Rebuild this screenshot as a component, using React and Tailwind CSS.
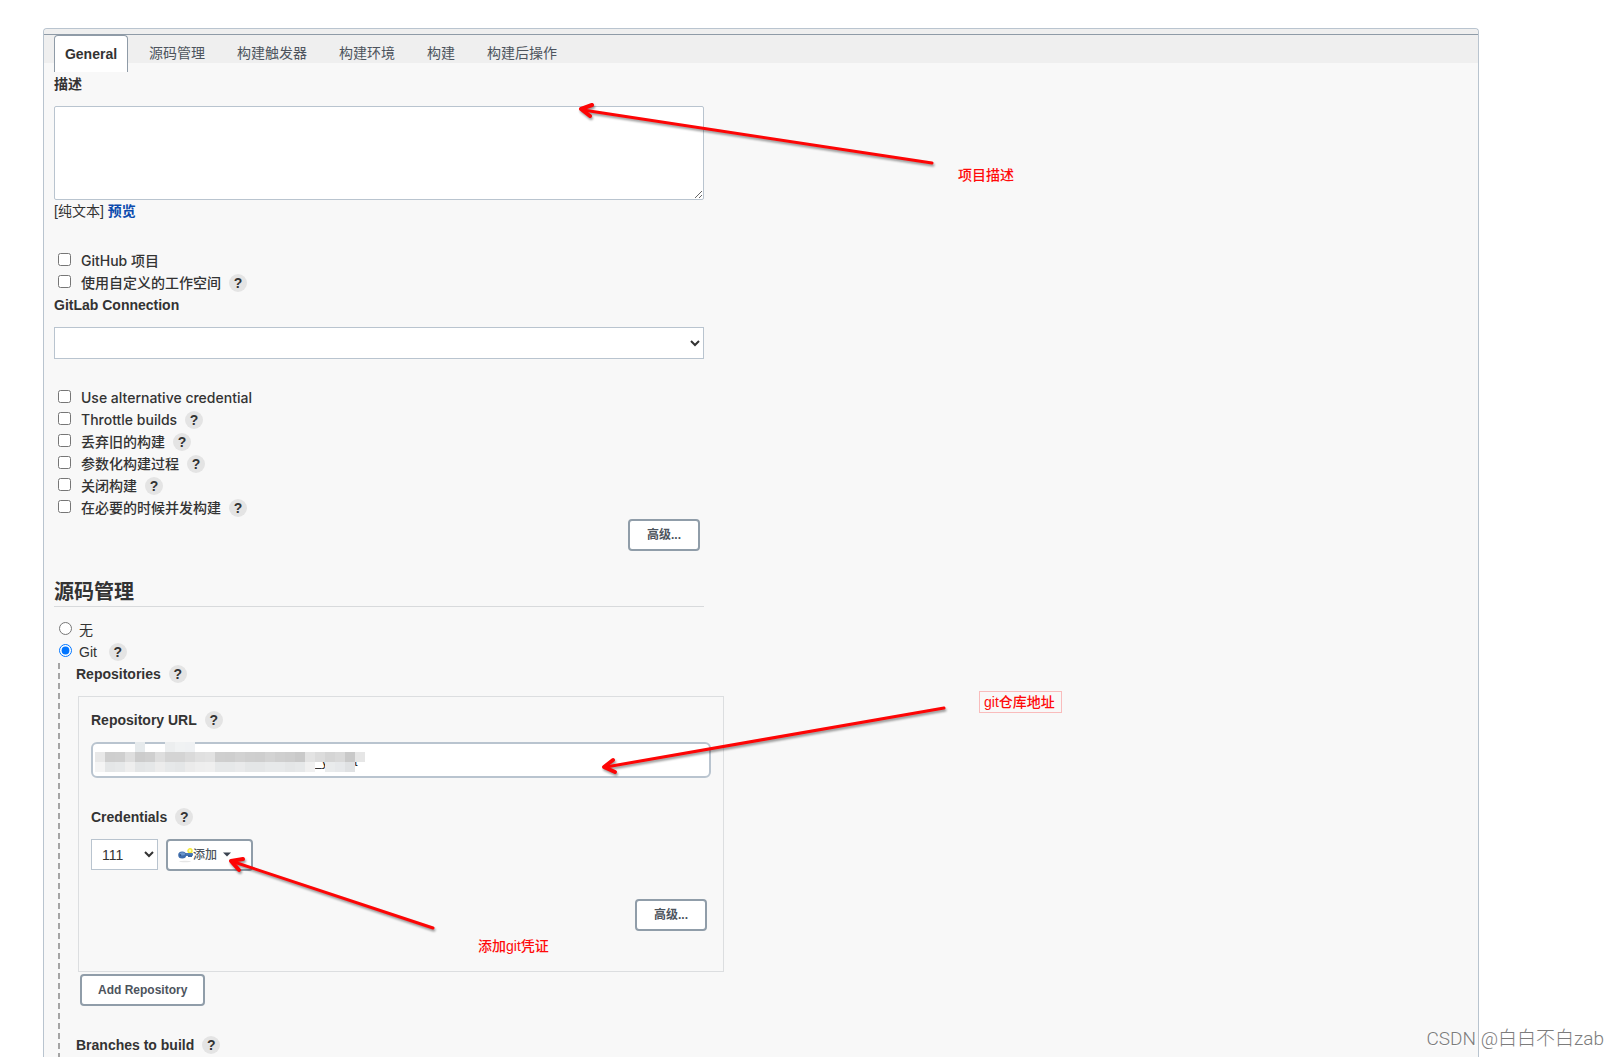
import React from 'react';

const TABS = ['源码管理', '构建触发器', '构建环境', '构建', '构建后操作'];

const BUILD_OPTIONS = [
  { id: 'alt-credential', label: 'Use alternative credential', help: false },
  { id: 'throttle', label: 'Throttle builds', help: true },
  { id: 'discard', label: '丢弃旧的构建', help: true },
  { id: 'params', label: '参数化构建过程', help: true },
  { id: 'disable', label: '关闭构建', help: true },
  { id: 'concurrent', label: '在必要的时候并发构建', help: true },
];

// Grey levels of the masked repository url, one per 10px cell
const MASK_TOP = [
  [4, '#e6eaec'], [7, '#eceeef'], [8, '#f0f2f3'], [9, '#eff1f3'],
];
const MASK_MIDDLE = [
  '#e8e8e8', '#cecece', '#cfcfcf', '#dedede', '#cccccc', '#cfcfcf', '#dedede', '#d4d4d4', '#d4d4d4',
  '#dadada', '#e0e0e0', '#e2e2e2', '#cfcfcf', '#cecece', '#d2d2d2', '#cfcfcf', '#cecece', '#d3d3d3',
  '#cfcfcf', '#cdcdcd', '#c9c9c9', '#e3e3e3', '#dcdcdc', '#d5d5d5', '#d9d9d9', '#c9c9c9', '#e6e6e6',
];
const MASK_BOTTOM = [
  '#f4f4f4', '#e4e6e7', '#e6e8e9', '#eeeeee', '#e3e5e6', '#e5e7e8', '#ececec', '#e6e8e9', '#e4e6e7',
  '#ebebeb', '#eeeeee', '#efefef', '#e6e8e9', '#e6e8e9', '#e9eaeb', '#e4e6e7', '#e4e6e7', '#e7e9ea',
  '#e7e9ea', '#e4e6e7', '#e6e8e9', '#f0f0f0', null, '#e9ebec', '#e6e8ea', '#dfe1e3', null,
];

const ARROWS = [
  { id: 'desc', line: 'M932 163 L583 110', head: 'M592 105 L581 109 L590 116' },
  { id: 'url', line: 'M944 708 L606 767', head: 'M613 760 L604 767 L615 772' },
  { id: 'cred', line: 'M433 928 L234 862', head: 'M243 859 L231 861 L239 870' },
];

const HelpButton = ({ topic }) => (
  <button
    type="button"
    aria-label={`Help: ${topic}`}
    className="ml-2 h-[18px] w-[18px] shrink-0 rounded-full bg-[#e4e4e4] text-center text-sm leading-[18px] font-bold text-[#333]"
  >
    ?
  </button>
);

const CheckRow = ({ id, label, help }) => (
  <div className="flex h-[22px] items-center">
    <input id={id} type="checkbox" className="mr-[10px] mb-[3px] ml-1 h-[13px] w-[13px]" />
    <label htmlFor={id} className="font-['Inter','Noto_Sans_CJK_SC',sans-serif] text-sm leading-[22px] font-medium">{label}</label>
    {help && <HelpButton topic={label} />}
  </div>
);

const FieldLabel = ({ htmlFor, children }) => (
  <div className="flex h-[22px] items-center">
    <label htmlFor={htmlFor} className="font-bold">{children}</label>
    <HelpButton topic={children} />
  </div>
);

const FormButton = ({ className = '', children }) => (
  <button
    type="button"
    className={`flex h-8 items-center rounded border-2 border-[#909da9] bg-white text-xs text-[#4d545d] ${className}`}
  >
    {children}
  </button>
);

const KeyIcon = () => (
  <svg width="15" height="15" viewBox="0 0 15 15" aria-hidden="true">
    <ellipse cx="7" cy="13.5" rx="6" ry="0.8" fill="#e6e6e6" />
    <circle cx="12" cy="2.8" r="2" fill="#fffbb0" stroke="#f5ea3a" strokeWidth="1.4" />
    <rect x="6" y="5" width="9" height="3" rx="1" fill="#4a78b5" />
    <rect x="10" y="7" width="4" height="2" fill="#3b659f" />
    <ellipse cx="4.2" cy="7" rx="4" ry="3.6" fill="#3f6dab" />
    <ellipse cx="4.4" cy="5.8" rx="2.8" ry="1.6" fill="#6c96cb" />
    <circle cx="2.4" cy="7" r="0.7" fill="#27476f" />
  </svg>
);

const UrlMask = () => (
  <svg width="270" height="30" viewBox="0 0 270 30" shapeRendering="crispEdges" aria-hidden="true" className="pointer-events-none absolute top-0 left-1">
    {MASK_TOP.map(([col, fill]) => (
      <rect key={col} x={col * 10} y="0" width="10" height="10" fill={fill} />
    ))}
    {MASK_MIDDLE.map((fill, i) => (
      <rect key={i} x={i * 10} y="10" width="10" height="10" fill={fill} />
    ))}
    {MASK_BOTTOM.map((fill, i) => (
      fill && <rect key={i} x={i * 10} y="20" width="10" height="10" fill={fill} />
    ))}
  </svg>
);

// Red arrows and notes that lie over the form
const Annotations = () => (
  <div className="pointer-events-none absolute top-0 left-0 text-sm leading-5 font-medium text-[#ff0a0a]">
    <svg width="1100" height="1000" viewBox="0 0 1100 1000" aria-hidden="true" className="max-w-none">
      <g fill="none" stroke="#fd0505" strokeWidth="3" strokeLinecap="round" strokeLinejoin="round" className="drop-shadow-[1px_2px_1px_rgba(0,0,0,0.4)]">
        {ARROWS.map((arrow) => (
          <g key={arrow.id}>
            <path d={arrow.line} />
            <path d={arrow.head} strokeWidth="4" />
          </g>
        ))}
      </g>
    </svg>
    <span className="absolute top-[165px] left-[958px] whitespace-nowrap">项目描述</span>
    <span className="absolute top-[691px] left-[979px] border border-[#f9bcbc] pr-[6px] pl-1 whitespace-nowrap">git仓库地址</span>
    <span className="absolute top-[936px] left-[478px] whitespace-nowrap">添加git凭证</span>
  </div>
);

const GitSection = () => (
  <div className="-mr-5 ml-1 flex grow">
    <div className="w-[2px] shrink-0 bg-[repeating-linear-gradient(to_bottom,#a5a5a5_0px,#a5a5a5_6px,transparent_6px,transparent_10px)]" />
    <div className="grow pl-4">
      <FieldLabel>Repositories</FieldLabel>

      <div className="mt-[11px] ml-[2px] border border-[#dcdee0] px-3 pt-3 pb-10">
        <FieldLabel htmlFor="repo-url">Repository URL</FieldLabel>
        <div className="relative mt-[11px]">
          <input
            id="repo-url"
            type="text"
            defaultValue="_y        t"
            className="block h-9 w-full rounded-md border-2 border-[#b9c4cf] bg-white pt-1 pl-[222px] text-xs text-[#222]"
          />
          <UrlMask />
        </div>

        <div className="mt-7">
          <FieldLabel htmlFor="credentials">Credentials</FieldLabel>
        </div>
        <div className="mt-[11px] flex gap-2">
          <select id="credentials" className="h-[31px] w-[67px] border border-[#b9c4cf] bg-white pl-[6px] text-sm">
            <option>111</option>
          </select>
          <FormButton className="w-[87px] pl-[10px] font-medium">
            <KeyIcon />
            <span>添加</span>
            <svg width="8" height="5" viewBox="0 0 8 5" aria-hidden="true" className="mb-[2px] ml-[6px]">
              <path d="M0 0.5 H8 L4 4.5 Z" fill="#3b4450" />
            </svg>
          </FormButton>
        </div>

        <div className="mt-7 mr-1 flex justify-end">
          <FormButton className="px-[17px] font-bold">高级...</FormButton>
        </div>
      </div>

      <FormButton className="mt-[2px] ml-1 px-4 font-bold">Add Repository</FormButton>

      <div className="mt-7">
        <FieldLabel>Branches to build</FieldLabel>
      </div>
    </div>
  </div>
);

export default function App() {
  return (
    <div className="relative flex min-h-screen bg-white pt-7 pr-[140px] pl-[43px] font-['Liberation_Sans','Noto_Sans_CJK_SC',sans-serif] text-sm leading-[22px] text-[#333]">
      <main className="flex grow flex-col rounded-t border border-b-0 border-[#b9c4cf] bg-[#f8f8f8]">
        <div className="rounded-t bg-[#efefef] pt-[5px]">
          <nav className="flex h-[29px] items-start border-t border-[#8f9ba7] pl-[10px]">
            <a href="#general" className="mr-[5px] flex h-[37px] w-[74px] items-center justify-center rounded-t border border-b-0 border-[#8f9ba7] bg-white font-bold">
              General
            </a>
            {TABS.map((tab) => (
              <a key={tab} href={`#${tab}`} className="px-4 py-[7px] text-[#4d545d]">{tab}</a>
            ))}
          </nav>
        </div>

        <form className="flex w-full max-w-[660px] grow flex-col pl-[10px]">
          <label htmlFor="description" className="mt-[10px] font-bold">描述</label>
          <textarea id="description" className="mt-[11px] h-[94px] w-full rounded-xs border border-[#b9c4cf] bg-white" />
          <div>
            [纯文本] <a href="#preview" className="font-bold text-[#0b4aad]">预览</a>
          </div>

          <div className="mt-7">
            <CheckRow id="github" label="GitHub 项目" />
            <CheckRow id="workspace" label="使用自定义的工作空间" help />
          </div>
          <label htmlFor="gitlab" className="font-bold">GitLab Connection</label>
          <select id="gitlab" className="mt-[11px] h-8 w-full border border-[#b9c4cf] bg-white" />

          <div className="mt-7">
            {BUILD_OPTIONS.map((option) => (
              <CheckRow key={option.id} {...option} />
            ))}
          </div>
          <div className="mr-1 flex justify-end">
            <FormButton className="px-[17px] font-bold">高级...</FormButton>
          </div>

          <h2 className="mt-[27px] border-b border-[#d8dadc] text-xl leading-7 font-bold">源码管理</h2>
          <div className="mt-3">
            <div className="flex h-[22px] items-center">
              <input id="scm-none" type="radio" name="scm" className="mr-[7px] mb-[3px] ml-[5px] h-[13px] w-[13px]" />
              <label htmlFor="scm-none">无</label>
            </div>
            <div className="flex h-[22px] items-center">
              <input id="scm-git" type="radio" name="scm" defaultChecked className="mr-[7px] mb-[3px] ml-[5px] h-[13px] w-[13px]" />
              <label htmlFor="scm-git" className="mr-1">Git</label>
              <HelpButton topic="Git" />
            </div>
          </div>
          <GitSection />
        </form>
      </main>

      <Annotations />
      <div className="absolute right-[15px] bottom-[3px] font-['Roboto','Noto_Sans_CJK_SC',sans-serif] text-[19px] leading-[30px] font-light text-[#7c7c7c] [text-shadow:1px_1px_0_#fff]">
        CSDN @白白不白zab
      </div>
    </div>
  );
}
